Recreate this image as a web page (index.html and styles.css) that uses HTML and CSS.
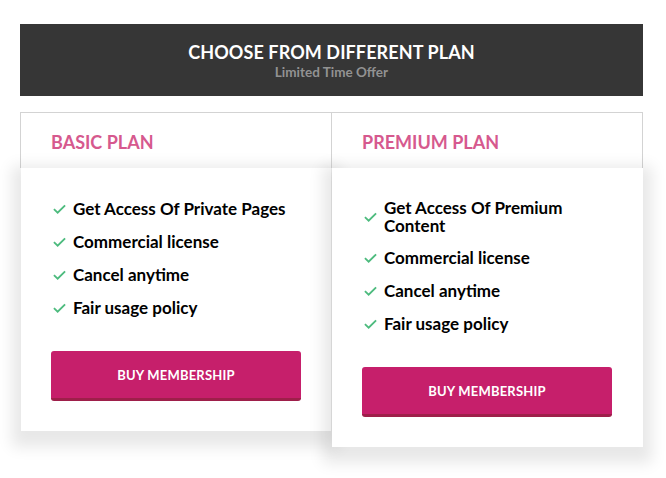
FILE: index.html
```html
<!DOCTYPE html>
<html>
<head>
<meta charset="utf-8">
<link rel="stylesheet" href="styles.css">
</head>
<body>
<div class="wrap">
  <header class="banner">
    <h1 class="banner-title">CHOOSE FROM DIFFERENT PLAN</h1>
    <p class="banner-sub">Limited Time Offer</p>
  </header>
  <div class="plans">
    <section class="plan">
      <div class="plan-head"><h2 class="plan-name">BASIC PLAN</h2></div>
      <div class="plan-body plan-body-basic">
        <ul class="features">
          <li class="feature"><svg class="check" viewBox="0 0 14 10"><path d="M1 5.2 L5 9 L13 1"/></svg><span>Get Access Of Private Pages</span></li>
          <li class="feature"><svg class="check" viewBox="0 0 14 10"><path d="M1 5.2 L5 9 L13 1"/></svg><span>Commercial license</span></li>
          <li class="feature"><svg class="check" viewBox="0 0 14 10"><path d="M1 5.2 L5 9 L13 1"/></svg><span>Cancel anytime</span></li>
          <li class="feature"><svg class="check" viewBox="0 0 14 10"><path d="M1 5.2 L5 9 L13 1"/></svg><span>Fair usage policy</span></li>
        </ul>
        <a class="buy" href="#">BUY MEMBERSHIP</a>
      </div>
    </section>
    <section class="plan">
      <div class="plan-head"><h2 class="plan-name">PREMIUM PLAN</h2></div>
      <div class="plan-body">
        <ul class="features">
          <li class="feature"><svg class="check" viewBox="0 0 14 10"><path d="M1 5.2 L5 9 L13 1"/></svg><span>Get Access Of Premium Content</span></li>
          <li class="feature"><svg class="check" viewBox="0 0 14 10"><path d="M1 5.2 L5 9 L13 1"/></svg><span>Commercial license</span></li>
          <li class="feature"><svg class="check" viewBox="0 0 14 10"><path d="M1 5.2 L5 9 L13 1"/></svg><span>Cancel anytime</span></li>
          <li class="feature"><svg class="check" viewBox="0 0 14 10"><path d="M1 5.2 L5 9 L13 1"/></svg><span>Fair usage policy</span></li>
        </ul>
        <a class="buy" href="#">BUY MEMBERSHIP</a>
      </div>
    </section>
  </div>
</div>
</body>
</html>
```

FILE: styles.css
```css
* { box-sizing: border-box; }
html, body { margin: 0; padding: 0; background: #fff; }
body {
  font-family: "Lato", "Open Sans", sans-serif;
  width: 666px;
  min-height: 478px;
  padding: 24px 23px 31px 20px;
}
.wrap {
  width: 623px;
}
.banner {
  background: #363636;
  height: 72px;
  padding-top: 17px;
  text-align: center;
}
.banner-title {
  margin: 0;
  color: #fff;
  font-size: 18px;
  font-weight: 700;
  line-height: 22px;
  letter-spacing: 0.1px;
}
.banner-sub {
  margin: 1px 0 0;
  color: #929292;
  font-size: 13.5px;
  font-weight: 700;
  line-height: 16px;
}
.plans {
  display: grid;
  grid-template-columns: 312px 311px;
  margin-top: 16px;
  align-items: start;
}
.plan { position: relative; }
.plan + .plan { margin-left: -1px; }
.plan-head {
  border: 1px solid #d3d3d3;
  border-bottom: none;
  height: 56px;
  padding: 0 30px;
  display: flex;
  align-items: center;
}
.plan-name {
  margin: 0;
  color: #d6598e;
  font-size: 18px;
  font-weight: 700;
  line-height: 22px;
  padding-top: 2px;
}
.plan-body {
  position: relative;
  background: #fff;
  margin: 0 0 0 1px;
  padding: 31px 30px 30px 30px;
  box-shadow: 0 7px 14px 9px rgba(0, 0, 0, 0.095);
}
.plan-body-basic { margin-right: 1px; }
.features {
  list-style: none;
  margin: 0;
  padding: 0 0 0 2px;
  display: flex;
  flex-direction: column;
  gap: 13px;
}
.feature {
  display: flex;
  align-items: center;
  gap: 7px;
  min-height: 20px;
  font-size: 17px;
  font-weight: 700;
  line-height: 18px;
  color: #000;
  padding-right: 14px;
}
.check {
  flex: none;
  width: 13px;
  height: 10px;
  fill: none;
  stroke: #4dbb7e;
  stroke-width: 2;
}
.buy {
  display: block;
  margin-top: 33px;
  width: 250px;
  height: 50px;
  background: #c61f6b;
  border-bottom: 3px solid #9e1f4a;
  border-radius: 3px;
  color: #fff;
  text-decoration: none;
  text-align: center;
  font-size: 13px;
  font-weight: 700;
  letter-spacing: 0.2px;
  line-height: 48px;
}
```
